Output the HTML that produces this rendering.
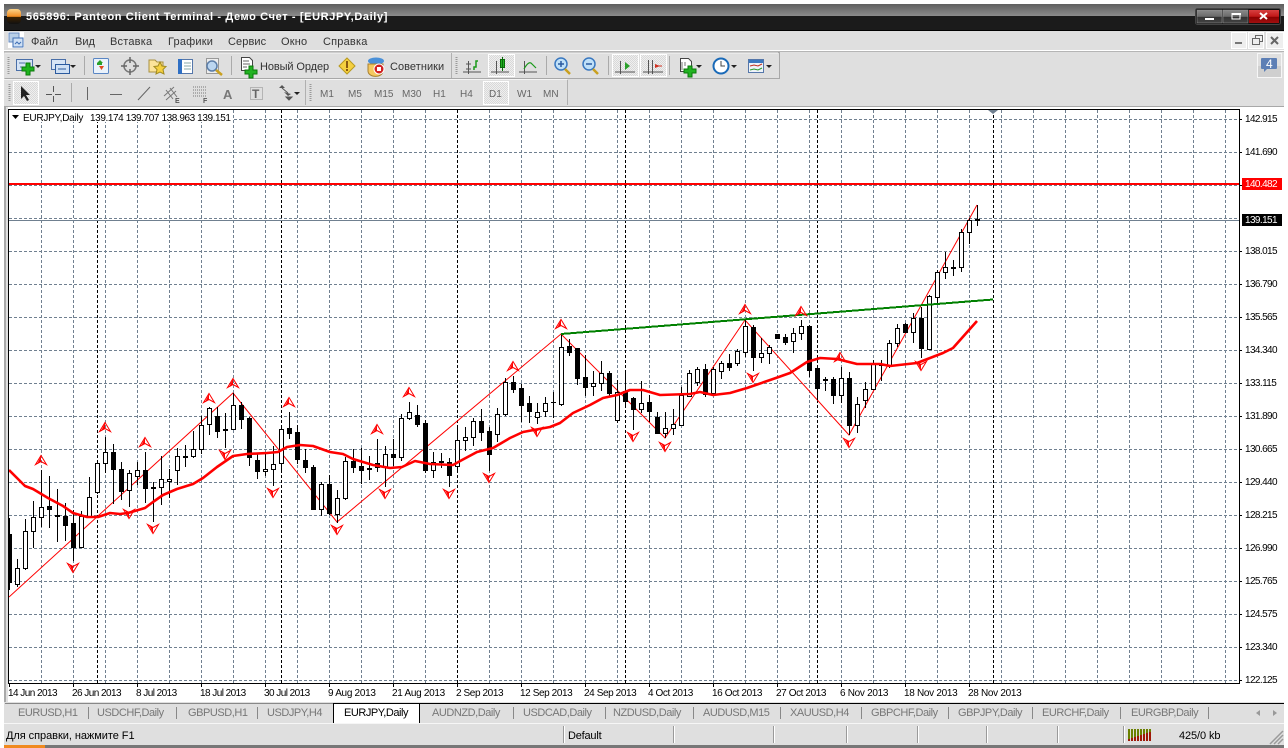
<!DOCTYPE html>
<html><head><meta charset="utf-8"><title>Panteon Client Terminal</title>
<style>
html,body{margin:0;padding:0;background:#fff;width:1288px;height:748px;overflow:hidden}
svg{display:block;position:absolute;left:0;top:0}
text{font-family:"Liberation Sans","Noto Sans CJK SC",sans-serif;font-size:11px;fill:#333}
.ax{font-size:10px;letter-spacing:-.6px;fill:#000}
.d1{letter-spacing:-.55px}.d2{letter-spacing:-.4px}.d3{letter-spacing:-.3px}
.tab{fill:#777;letter-spacing:-.45px}
.tf{font-size:10px;fill:#666}
</style></head><body>
<svg width="1288" height="748" viewBox="0 0 1288 748" xmlns="http://www.w3.org/2000/svg">
<defs>
<linearGradient id="tg" x1="0" y1="0" x2="0" y2="1"><stop offset="0" stop-color="#5e5e5e"/><stop offset="1" stop-color="#8c8c8c"/></linearGradient>
<linearGradient id="or" x1="0" y1="0" x2="0" y2="1"><stop offset="0" stop-color="#fbd48a"/><stop offset=".5" stop-color="#f08a20"/><stop offset=".55" stop-color="#3a2000"/><stop offset="1" stop-color="#111"/></linearGradient>
<linearGradient id="bt" x1="0" y1="0" x2="0" y2="1"><stop offset="0" stop-color="#8a8a8a"/><stop offset=".5" stop-color="#6a6a6a"/><stop offset=".55" stop-color="#333"/><stop offset="1" stop-color="#444"/></linearGradient>
<linearGradient id="rd" x1="0" y1="0" x2="0" y2="1"><stop offset="0" stop-color="#d84040"/><stop offset=".5" stop-color="#c01818"/><stop offset=".55" stop-color="#8c0000"/><stop offset="1" stop-color="#a01010"/></linearGradient>
<pattern id="ck" width="2" height="2" patternUnits="userSpaceOnUse"><rect width="2" height="2" fill="#efefef"/><rect width="1" height="1" fill="#d8d8d8"/><rect x="1" y="1" width="1" height="1" fill="#d8d8d8"/></pattern>
<g id="up"><path d="M-5.5 4.5L0-4.5 5.5 4.5 0 1.5z" fill="none" stroke="#f00"/><path d="M0-4L-4 4 0 1.5z" fill="#f00"/></g>
<g id="dn"><path d="M-5.5-4.5L0 4.5 5.5-4.5 0-1.5z" fill="none" stroke="#f00"/><path d="M0 4L-4-4 0-1.5z" fill="#f00"/></g>
<g id="dd"><path d="M-3 0h6l-3 3z" fill="#222"/></g>
</defs>

<!-- window frame -->
<rect x="4" y="4" width="1280" height="744" fill="#dfdfdf"/>
<rect x="4" y="4" width="1280" height="12" fill="url(#tg)"/>
<rect x="4" y="16" width="1280" height="15" fill="#1b1b1b"/>
<rect x="4" y="30" width="1280" height="1" fill="#000"/>
<rect x="4" y="745" width="1280" height="3" fill="#777"/>
<rect x="4" y="745" width="41" height="3" fill="#f08a20"/>
<rect x="7" y="9" width="14" height="15" rx="4" fill="url(#or)"/>
<text x="26" y="20" style="font-weight:bold;fill:#fff;letter-spacing:.62px">565896: Panteon Client Terminal - Демо Счет - [EURJPY,Daily]</text>
<!-- window buttons -->
<rect x="1195.5" y="8.5" width="85" height="16" rx="2" fill="#111" stroke="#444"/>
<rect x="1197" y="10" width="25" height="13" fill="url(#bt)" stroke="#999" stroke-width=".5"/>
<rect x="1223" y="10" width="25" height="13" fill="url(#bt)" stroke="#999" stroke-width=".5"/>
<rect x="1249" y="10" width="30" height="13" fill="url(#rd)"/>
<rect x="1205" y="18" width="9" height="2" fill="#fff"/>
<path d="M1232 13.5h8v5.500h-8z" fill="none" stroke="#fff"/><rect x="1232" y="13" width="9" height="2" fill="#fff"/>
<path d="M1260 13l7 6M1267 13l-7 6" stroke="#fff" stroke-width="2" fill="none"/>

<!-- menu -->
<rect x="4" y="50" width="1280" height="1" fill="#fff"/>
<rect x="4" y="51" width="1280" height="1" fill="#b5b5b5"/>
<rect x="8" y="32" width="16" height="16" fill="#fff"/>
<rect x="9" y="33" width="10" height="9" fill="#b8cfe8" stroke="#6a8cc0"/><rect x="13" y="38" width="10" height="9" fill="#cfe0f4" stroke="#3f6fb5"/><path d="M15 44l2-2 2 2 2-2" fill="none" stroke="#3f6fb5"/>
<text x="31" y="45">Файл</text><text x="75" y="45">Вид</text><text x="110" y="45" style="letter-spacing:.2px">Вставка</text><text x="168" y="45" style="letter-spacing:.2px">Графики</text><text x="228" y="45" style="letter-spacing:.1px">Сервис</text><text x="281" y="45" style="letter-spacing:.2px">Окно</text><text x="323" y="45" style="letter-spacing:.2px">Справка</text>
<g fill="#eee" stroke="#fff"><rect x="1231.500" y="32.500" width="15" height="16"/><rect x="1248.500" y="32.500" width="15" height="16"/><rect x="1266.500" y="32.500" width="17" height="16"/></g>
<rect x="1235" y="42" width="7" height="2" fill="#777"/>
<path d="M1252.500 38.500h7v6h-7zM1255.500 38.500v-3h7v6h-3" fill="none" stroke="#666"/>
<path d="M1271 37l7 7M1278 37l-7 7" stroke="#666" stroke-width="2" fill="none"/>

<!-- toolbars -->
<path d="M4.500 52.500H779.500V78.500H4.500" fill="none" stroke="#a8a8a8"/>
<path d="M5 53H778" stroke="#f4f4f4"/>
<path d="M451.500 53V78M567.500 80V105M305.500 80V105" stroke="#b0b0b0" fill="none"/>
<path d="M4 79.500H567" stroke="#f4f4f4"/>
<path d="M84.500 56V75M231.500 56V75M546.500 56V75M608.500 56V75M669.500 56V75M71.500 83V102" stroke="#aaa"/>
<path d="M8.500 57V75M9.500 84V102M456.500 57V75M310.500 84V102" stroke="#9a9a9a" stroke-dasharray="1 1" stroke-width="2"/>

<!-- row1 icons -->
<g>
<rect x="16.500" y="59.500" width="16" height="11" fill="#d6e4f5" stroke="#4a6fa8"/><path d="M19 63h6M20 67h8" stroke="#4a6fa8"/><path d="M26 63h4v4h4v4h-4v4h-4v-4h-4v-4h4z" fill="#1db31d" stroke="#0a7a0a"/><use href="#dd" x="38" y="65"/>
<rect x="51.500" y="59.500" width="14" height="10" fill="#d6e4f5" stroke="#4a6fa8"/><rect x="55.500" y="64.500" width="14" height="9" fill="#cfe0f4" stroke="#2b5a9e"/><path d="M58 69h8" stroke="#2b5a9e"/><use href="#dd" x="73" y="65"/>
<rect x="93.500" y="58.500" width="15" height="15" rx="1" fill="#eaf2fb" stroke="#5a86c4"/><path d="M97 63l3-3 3 3z" fill="#2aa02a"/><path d="M99 66h5l-2.500 4z" fill="#e04a20"/><path d="M97 63h5v2h-5z" fill="#2aa02a"/>
<circle cx="130" cy="66" r="6" fill="none" stroke="#777" stroke-width="1.500"/><path d="M130 57v6M130 69v6M121 66h6M133 66h6" stroke="#666" stroke-width="1.500"/>
<path d="M149 60h6l2 2h6v10h-14z" fill="#fbe39a" stroke="#a89040"/><path d="M160 62l2 4 4 .5-3 3 1 4.500-4-2-4 2 1-4.500-3-3 4-.5z" fill="#f5d040" stroke="#a08a20"/>
<rect x="178.500" y="59.500" width="14" height="14" fill="#fff" stroke="#5577aa"/><rect x="178" y="59" width="4" height="15" fill="#2f6fc4"/><path d="M184 63h7M184 66h7M184 69h7" stroke="#8aa"/>
<rect x="206.500" y="58.500" width="12" height="15" fill="#eee" stroke="#999"/><circle cx="212" cy="66" r="5" fill="#bcd6f0" stroke="#5d7ea8" stroke-width="1.500"/><path d="M216 70l6 5" stroke="#c9a020" stroke-width="2.500"/>
<path d="M241.500 57.500h8l3 3v10h-11z" fill="#fff" stroke="#444"/><path d="M243 61h6M243 64h7M243 67h4" stroke="#666"/><path d="M249 66h4v4h4v4h-4v4h-4v-4h-4v-4h4z" fill="#22b322" stroke="#0a7a0a"/>
<text x="260" y="70" style="letter-spacing:-.1px">Новый Ордер</text>
<path d="M347 58l8 8-8 8-8-8z" fill="#f5d040" stroke="#b89a20"/><rect x="346" y="61" width="2" height="7" fill="#8a5a10"/><rect x="346" y="69" width="2" height="2" fill="#8a5a10"/>
<ellipse cx="376" cy="61" rx="8" ry="3.500" fill="#4a90d8"/><path d="M368 64h15v7a7 5 0 0 1-15 0z" fill="#f5c860" stroke="#a88030"/><circle cx="379" cy="69" r="5" fill="#d02020" stroke="#fff"/><rect x="377" y="67" width="4" height="4" fill="#fff"/>
<text x="390" y="70" style="letter-spacing:.05px">Советники</text>
</g>
<!-- chart type icons -->
<g>
<rect x="488.500" y="54.500" width="26" height="22" fill="url(#ck)" stroke="#fff"/>
<rect x="612.500" y="54.500" width="26" height="22" fill="url(#ck)" stroke="#fff"/>
<rect x="640.500" y="54.500" width="26" height="22" fill="url(#ck)" stroke="#fff"/>
<path d="M468.500 61v13M463 72h18M466 64h5M466 69h5" stroke="#555" fill="none"/><path d="M474 70v-3h2v-6h2" stroke="#1a9a1a" fill="none" stroke-width="1.500"/>
<path d="M496.500 61v13M491 72h18" stroke="#555" fill="none"/><rect x="500.500" y="59.500" width="4" height="8" fill="#21b321" stroke="#0a6a0a"/><path d="M502.500 57v14" stroke="#0a6a0a"/>
<path d="M524.500 61v13M519 72h18" stroke="#555" fill="none"/><path d="M524 69q5-9 8-5l4 4" stroke="#1a9a1a" fill="none" stroke-width="1.200"/>
<circle cx="561" cy="64" r="6" fill="#bfe0f8" stroke="#3a78c0" stroke-width="1.500"/><path d="M558 64h6M561 61v6" stroke="#2a5aa0" stroke-width="1.500"/><path d="M565 69l5 5" stroke="#c9a020" stroke-width="2.500"/>
<circle cx="589" cy="64" r="6" fill="#bfe0f8" stroke="#3a78c0" stroke-width="1.500"/><path d="M586 64h6" stroke="#2a5aa0" stroke-width="1.500"/><path d="M593 69l5 5" stroke="#c9a020" stroke-width="2.500"/>
<path d="M620.500 61v13M615 72h20" stroke="#555" fill="none"/><path d="M625 62l5 4-5 4z" fill="#2aa02a"/>
<path d="M648.500 60v14M652.500 60v14M643 72h20" stroke="#555" fill="none"/><path d="M660 66l-5-2v4z" fill="#d03020"/><path d="M656 66h6" stroke="#d03020"/>
<path d="M680.500 58.500h8l3 3v10h-11z" fill="#fff" stroke="#444"/><path d="M682 62v8M685 62v4" stroke="#777"/><path d="M688 66h4v3h4v4h-4v4h-4v-4h-4v-4h4z" fill="#22b322" stroke="#0a7a0a"/><use href="#dd" x="699" y="65"/>
<circle cx="721" cy="66" r="7.500" fill="#fff" stroke="#1a6ab8" stroke-width="2"/><path d="M721 61v5h4" stroke="#444" fill="none"/><use href="#dd" x="734" y="65"/>
<rect x="748.500" y="59.500" width="15" height="13" fill="#eef3f9" stroke="#5577aa"/><rect x="749" y="60" width="14" height="3" fill="#3a78c0"/><path d="M750 66l4-1 4 1 4-2" stroke="#c03020" fill="none"/><path d="M750 70l4-1 4 1 4-2" stroke="#2a9a2a" fill="none"/><use href="#dd" x="769" y="65"/>
</g>
<!-- message button -->
<rect x="1257.500" y="53.500" width="24" height="24" fill="#dfdfdf" stroke="#f6f6f6"/>
<rect x="1258" y="66" width="23" height="11" fill="#cfcfcf"/>
<path d="M1262 58h14a1 1 0 0 1 1 1v9a1 1 0 0 1-1 1h-9l-3 3v-3h-2a1 1 0 0 1-1-1v-9a1 1 0 0 1 1-1z" fill="#5d7fb5"/>
<text x="1266" y="68" style="fill:#fff;font-size:12px">4</text>

<!-- row 2 -->
<rect x="13.500" y="81.500" width="25" height="23" fill="url(#ck)" stroke="#fff"/>
<path d="M21 86v13l3-3 3 5 2-1-3-5h4z" fill="#222"/>
<path d="M53.500 86v6M53.500 96v6M46 94.500h6M55 94.500h6" stroke="#555"/>
<path d="M87.500 87v13M110 94.500h12M138 100l12-13" stroke="#666" fill="none"/>
<path d="M164 96l10-9M166 100l10-9M166 90l7 9M170 88l7 9" stroke="#777" fill="none"/><text x="175" y="103" style="font-size:7px;fill:#555;font-weight:bold">E</text>
<path d="M193 87h14M193 90h14M193 93h14M193 96h14" stroke="#777" stroke-dasharray="1 1"/><text x="203" y="103" style="font-size:7px;fill:#555;font-weight:bold">F</text>
<text x="223" y="99" style="font-size:13px;font-weight:bold;fill:#777">A</text>
<rect x="250.500" y="87.500" width="12" height="12" fill="none" stroke="#888" stroke-dasharray="1 1"/><text x="252" y="98" style="font-size:12px;font-weight:bold;fill:#666">T</text>
<path d="M279 88l3-3 3 3zM284 92l4 4 3-2" fill="#555"/><path d="M282 88l6 5M286 97l3 3 3-3z" fill="#555" stroke="#555"/><use href="#dd" x="297" y="92"/>
<rect x="483.500" y="81.500" width="25" height="23" fill="url(#ck)" stroke="#fff"/>
<text class="tf" x="320" y="97">M1</text><text class="tf" x="348" y="97">M5</text><text class="tf" x="374" y="97">M15</text><text class="tf" x="402" y="97">M30</text><text class="tf" x="433" y="97">H1</text><text class="tf" x="460" y="97">H4</text><text class="tf" x="489" y="97">D1</text><text class="tf" x="517" y="97">W1</text><text class="tf" x="543" y="97">MN</text>

<!-- chart area -->
<rect x="4" y="106" width="1280" height="1" fill="#a8a8a8"/>
<rect x="4" y="107" width="4" height="595" fill="#a9a9a9"/>
<rect x="6" y="107" width="2" height="595" fill="#e0e0e0"/>
<rect x="8" y="107" width="1276" height="595" fill="#fff"/>
<rect x="1284" y="4" width="4" height="744" fill="#fff"/>
<g shape-rendering="crispEdges" fill="none">
<path stroke="#708090" stroke-dasharray="3 2" d="M9 119.500H1239M9 152.500H1239M9 185.500H1239M9 218.500H1239M9 251.500H1239M9 284.500H1239M9 317.500H1239M9 350.500H1239M9 383.500H1239M9 416.500H1239M9 449.500H1239M9 482.500H1239M9 515.500H1239M9 548.500H1239M9 581.500H1239M9 614.500H1239M9 647.500H1239M9 680.500H1239"/>
<path stroke="#708090" stroke-dasharray="3 2" d="M41.500 110V683M73.500 110V683M105.500 110V683M137.500 110V683M169.500 110V683M201.500 110V683M233.500 110V683M265.500 110V683M297.500 110V683M329.500 110V683M361.500 110V683M393.500 110V683M425.500 110V683M457.500 110V683M489.500 110V683M521.500 110V683M553.500 110V683M585.500 110V683M617.500 110V683M649.500 110V683M681.500 110V683M713.500 110V683M745.500 110V683M777.500 110V683M809.500 110V683M841.500 110V683M873.500 110V683M905.500 110V683M937.500 110V683M969.500 110V683M1001.500 110V683M1033.500 110V683M1065.500 110V683M1097.500 110V683M1129.500 110V683M1161.500 110V683M1193.500 110V683M1225.500 110V683"/>
<path stroke="#000" stroke-dasharray="3 2" d="M97.500 110V683M281.500 110V683M457.500 110V683M625.500 110V683M817.500 110V683M993.500 110V683"/>
<path stroke="#f00" stroke-width="2" d="M9 184H1240"/>
<path stroke="#708090" d="M9 220.500H1240"/>
</g>

<svg x="9" y="110" width="1230" height="573" viewBox="9 110 1230 573">
<!-- thin zigzag -->
<path fill="none" stroke="#f00" stroke-width="1" d="M9 597L233 393 337 522 561 334 665 438 745 320 849 435 977 205"/>
<!-- wicks -->
<g shape-rendering="crispEdges" fill="none">
<path stroke="#000" d="M9.500 518V590M17.500 559V587M25.500 519V570M33.500 501V548M41.500 470V527M49.500 476V528M57.500 489V542M65.500 503V541M73.500 510V561M81.500 511V547M89.500 477V517M97.500 463V494M105.500 437V473M113.500 444V504M121.500 462V500M129.500 470V507M137.500 462V485M145.500 452V503M153.500 482V522M161.500 456V505M169.500 469V498M177.500 448V485M185.500 445V467M193.500 431V458M201.500 416V454M209.500 407V435M217.500 407V438M225.500 413V448M233.500 393V430M241.500 402V429M249.500 417V466M257.500 453V479M265.500 453V476M273.500 446V486M281.500 427V473M289.500 412V439M297.500 425V464M305.500 449V473M313.500 465V510M321.500 482V516M329.500 475V515M337.500 490V523M345.500 457V500M353.500 449V473M361.500 448V484M369.500 456V480M377.500 439V472M385.500 446V487M393.500 439V466M401.500 414V461M409.500 402V420M417.500 405V427M425.500 420V473M433.500 452V478M441.500 453V468M449.500 458V487M457.500 427V473M465.500 427V451M473.500 418V446M481.500 409V441M489.500 427V471M497.500 408V442M505.500 378V416M513.500 376V393M521.500 384V422M529.500 396V423M537.500 403V424M545.500 397V417M553.500 392V418M561.500 334V406M569.500 339V356M577.500 348V385M585.500 355V396M593.500 371V396M601.500 361V391M609.500 371V397M617.500 380V423M625.500 373V407M633.500 397V430M641.500 381V413M649.500 395V422M657.500 412V434M665.500 412V438M673.500 409V435M681.500 387V425M689.500 370V397M697.500 367V386M705.500 364V397M713.500 367V395M721.500 361V379M729.500 354V371M737.500 349V366M745.500 320V357M753.500 325V371M761.500 338V363M769.500 345V364M777.500 334V339M785.500 334V345M793.500 328V353M801.500 320V340M809.500 325V377M817.500 368V400M825.500 377V391M833.500 377V404M841.500 367V403M849.500 372V435M857.500 397V433M865.500 382V408M873.500 360V389M881.500 360V381M889.500 340V368M897.500 324V347M905.500 323V333M913.500 313V343M921.500 307V358M929.500 295V350M937.500 270V305M945.500 252V279M953.500 260V276M961.500 229V272M969.500 218V244M977.500 205V226"/>
<!-- black bodies -->
<path stroke="#000" stroke-width="5" d="M9.500 534V583M49.500 506V510M57.500 515V517M65.500 516V526M73.500 523V548M113.500 452V470M121.500 469V492M145.500 470V489M153.500 487V489M217.500 416V432M225.500 429V431M241.500 405V420M249.500 418V458M257.500 460V472M289.500 428V434M297.500 432V460M305.500 460V468M313.500 467V510M329.500 484V514M353.500 461V468M361.500 466V471M369.500 468V470M377.500 463V468M393.500 454V458M417.500 415V425M425.500 423V471M441.500 461V463M449.500 462V476M481.500 421V433M489.500 431V455M513.500 382V390M521.500 388V406M529.500 403V412M553.500 402V403M569.500 346V353M577.500 348V379M585.500 377V388M609.500 373V394M625.500 391V402M633.500 398V410M649.500 402V412M657.500 417V434M705.500 369V395M729.500 363V368M753.500 327V358M777.500 334V339M785.500 337V343M809.500 326V371M817.500 368V389M825.500 379V381M833.500 379V396M849.500 378V426M881.500 364V366M905.500 324V333M921.500 318V349M953.500 267V269M977.500 219V221"/>
<!-- white bodies -->
<path stroke="#000" fill="#fff" d="M15.500 568.500h4V584.500h-4zM23.500 531.500h4V568.500h-4zM31.500 517.500h4V531.500h-4zM39.500 507.500h4V517.500h-4zM79.500 516.500h4V547.500h-4zM87.500 497.500h4V517.500h-4zM95.500 463.500h4V492.500h-4zM103.500 452.500h4V463.500h-4zM127.500 473.500h4V490.500h-4zM135.500 470.500h4V476.500h-4zM159.500 479.500h4V487.500h-4zM167.500 479.500h4V481.500h-4zM175.500 456.500h4V470.500h-4zM183.500 456.500h4V457.500h-4zM191.500 449.500h4V456.500h-4zM199.500 425.500h4V449.500h-4zM207.500 408.500h4V424.500h-4zM231.500 405.500h4V429.500h-4zM263.500 469.500h4V471.500h-4zM271.500 464.500h4V469.500h-4zM279.500 429.500h4V463.500h-4zM319.500 484.500h4V509.500h-4zM335.500 498.500h4V514.500h-4zM343.500 461.500h4V498.500h-4zM383.500 454.500h4V467.500h-4zM399.500 418.500h4V457.500h-4zM407.500 412.500h4V418.500h-4zM431.500 462.500h4V470.500h-4zM455.500 440.500h4V466.500h-4zM463.500 437.500h4V440.500h-4zM471.500 421.500h4V437.500h-4zM495.500 414.500h4V434.500h-4zM503.500 382.500h4V414.500h-4zM535.500 412.500h4V417.500h-4zM543.500 403.500h4V411.500h-4zM559.500 347.500h4V404.500h-4zM591.500 383.500h4V386.500h-4zM599.500 373.500h4V383.500h-4zM615.500 392.500h4V420.500h-4zM639.500 403.500h4V409.500h-4zM663.500 428.500h4V433.500h-4zM671.500 424.500h4V428.500h-4zM679.500 395.500h4V425.500h-4zM687.500 373.500h4V396.500h-4zM695.500 369.500h4V382.500h-4zM711.500 369.500h4V393.500h-4zM719.500 363.500h4V371.500h-4zM735.500 351.500h4V363.500h-4zM743.500 326.500h4V352.500h-4zM759.500 353.500h4V357.500h-4zM767.500 347.500h4V353.500h-4zM791.500 333.500h4V341.500h-4zM799.500 326.500h4V333.500h-4zM839.500 378.500h4V395.500h-4zM855.500 404.500h4V425.500h-4zM863.500 389.500h4V400.500h-4zM871.500 364.500h4V389.500h-4zM887.500 343.500h4V365.500h-4zM895.500 328.500h4V343.500h-4zM911.500 318.500h4V332.500h-4zM927.500 296.500h4V349.500h-4zM935.500 272.500h4V297.500h-4zM943.500 267.500h4V272.500h-4zM959.500 232.500h4V267.500h-4zM967.500 220.500h4V232.500h-4z"/>
<!-- green trend -->
<path stroke="#008000" stroke-width="2" d="M561 334L993 299.500"/>
</g>
<!-- MA -->
<path fill="none" stroke="#f00" stroke-width="2.600" stroke-linejoin="round" d="M9 470L17 478 25 486 33 489 48 498 63 506 73 513 87 517 98 517 110 513 120 514 128 513 145 508 153 502 163 495 177 489 193 484 203 478 217 467 233 456 247 454 267 453 278 452 287 447 300 445 313 446 330 452 343 454 353 459 373 465 390 468 402 467 415 461 430 464 453 465 462 460 477 452 493 448 510 438 523 432 550 427 560 423 573 413 590 405 603 398 617 395 630 390 643 390 660 395 690 394 700 392 713 395 730 393 747 388 773 379 790 373 807 362 820 358 837 359 857 364 880 364 890 366 917 363 943 353 953 348 977 321"/>
<!-- markers -->
<g>
<use href="#up" x="41" y="460"/><use href="#up" x="105" y="427"/><use href="#up" x="145" y="442"/><use href="#up" x="209" y="398"/><use href="#up" x="233" y="383"/><use href="#up" x="289" y="402"/><use href="#up" x="377" y="429"/><use href="#up" x="409" y="392"/><use href="#up" x="513" y="366"/><use href="#up" x="561" y="324"/><use href="#up" x="745" y="309"/><use href="#up" x="801" y="311"/><use href="#up" x="840" y="357"/>
<use href="#dn" x="73" y="568"/><use href="#dn" x="129" y="514"/><use href="#dn" x="153" y="529"/><use href="#dn" x="225" y="455"/><use href="#dn" x="273" y="493"/><use href="#dn" x="337" y="530"/><use href="#dn" x="385" y="494"/><use href="#dn" x="449" y="494"/><use href="#dn" x="489" y="478"/><use href="#dn" x="537" y="432"/><use href="#dn" x="633" y="437"/><use href="#dn" x="665" y="447"/><use href="#dn" x="753" y="378"/><use href="#dn" x="849" y="443"/><use href="#dn" x="921" y="366"/>
</g>
</svg>

<!-- borders -->
<g shape-rendering="crispEdges" fill="none" stroke="#000">
<path d="M8.500 109V684M8 109.500H1240M1239.500 109V684M8 683.500H1240"/>
<path d="M1239 119.500h3M1239 152.500h3M1239 185.500h3M1239 251.500h3M1239 284.500h3M1239 317.500h3M1239 350.500h3M1239 383.500h3M1239 416.500h3M1239 449.500h3M1239 482.500h3M1239 515.500h3M1239 548.500h3M1239 581.500h3M1239 614.500h3M1239 647.500h3M1239 680.500h3"/>
<path d="M9.500 684v3M73.500 684v3M137.500 684v3M201.500 684v3M265.500 684v3M329.500 684v3M393.500 684v3M457.500 684v3M521.500 684v3M585.500 684v3M649.500 684v3M713.500 684v3M777.500 684v3M841.500 684v3M905.500 684v3M969.500 684v3"/>
</g>
<path d="M988 110h10l-5 4z" fill="#708090"/>
<!-- label top left -->
<rect x="9" y="110" width="223" height="12" fill="#fff"/>
<path d="M12 115h7l-3.500 4z" fill="#000"/>
<text x="23" y="121" class="ax" style="letter-spacing:-.25px">EURJPY,Daily</text>
<text x="90" y="121" class="ax" style="letter-spacing:-.4px">139.174 139.707 138.963 139.151</text>

<!-- price axis -->
<g class="ax">
<text class="ax" x="1245" y="122">142.915</text><text class="ax" x="1245" y="155">141.690</text>
<rect x="1242" y="178" width="40" height="12" fill="#f00"/><text class="ax" x="1245" y="187" style="fill:#fff">140.482</text>
<rect x="1242" y="214" width="40" height="12" fill="#000"/><text class="ax" x="1245" y="223" style="fill:#fff">139.151</text>
<text class="ax" x="1245" y="254">138.015</text><text class="ax" x="1245" y="287">136.790</text><text class="ax" x="1245" y="320">135.565</text><text class="ax" x="1245" y="353">134.340</text><text class="ax" x="1245" y="386">133.115</text><text class="ax" x="1245" y="419">131.890</text><text class="ax" x="1245" y="452">130.665</text><text class="ax" x="1245" y="485">129.440</text><text class="ax" x="1245" y="518">128.215</text><text class="ax" x="1245" y="551">126.990</text><text class="ax" x="1245" y="584">125.765</text><text class="ax" x="1245" y="617">124.575</text><text class="ax" x="1245" y="650">123.340</text><text class="ax" x="1245" y="683">122.125</text>
</g>
<!-- date axis -->
<text class="ax d1" x="8" y="696">14 Jun 2013</text><text class="ax d1" x="72" y="696">26 Jun 2013</text><text class="ax d1" x="136" y="696">8 Jul 2013</text><text class="ax d1" x="200" y="696">18 Jul 2013</text><text class="ax d1" x="264" y="696">30 Jul 2013</text><text class="ax d3" x="328" y="696">9 Aug 2013</text><text class="ax d3" x="392" y="696">21 Aug 2013</text><text class="ax d2" x="456" y="696">2 Sep 2013</text><text class="ax d2" x="520" y="696">12 Sep 2013</text><text class="ax d2" x="584" y="696">24 Sep 2013</text><text class="ax d2" x="648" y="696">4 Oct 2013</text><text class="ax d2" x="712" y="696">16 Oct 2013</text><text class="ax d2" x="776" y="696">27 Oct 2013</text><text class="ax d3" x="840" y="696">6 Nov 2013</text><text class="ax d3" x="904" y="696">18 Nov 2013</text><text class="ax d3" x="968" y="696">28 Nov 2013</text>

<!-- tabs -->
<rect x="4" y="702" width="1280" height="21" fill="#dfdfdf"/>
<path d="M5 703.500H333M419 703.500H1284" stroke="#000" shape-rendering="crispEdges"/>
<path d="M5 703.500H333" stroke="#888" shape-rendering="crispEdges"/>
<rect x="333.500" y="703.500" width="86" height="19" fill="#fff" stroke="#000"/>
<rect x="334" y="722" width="85" height="1" fill="#fff"/>
<path d="M88.500 707V719M176.500 707V719M257.500 707V719M513.500 707V719M605.500 707V719M693.500 707V719M780.500 707V719M861.500 707V719M948.500 707V719M1032.500 707V719M1120.500 707V719M1208.500 707V719" stroke="#888" shape-rendering="crispEdges"/>
<text class="tab" x="18" y="716">EURUSD,H1</text><text class="tab" x="97" y="716">USDCHF,Daily</text><text class="tab" x="188" y="716">GBPUSD,H1</text><text class="tab" x="267" y="716">USDJPY,H4</text><text class="tab" x="344" y="716" style="fill:#000">EURJPY,Daily</text><text class="tab" x="432" y="716">AUDNZD,Daily</text><text class="tab" x="523" y="716">USDCAD,Daily</text><text class="tab" x="613" y="716">NZDUSD,Daily</text><text class="tab" x="703" y="716">AUDUSD,M15</text><text class="tab" x="790" y="716">XAUUSD,H4</text><text class="tab" x="871" y="716">GBPCHF,Daily</text><text class="tab" x="958" y="716">GBPJPY,Daily</text><text class="tab" x="1042" y="716">EURCHF,Daily</text><text class="tab" x="1131" y="716">EURGBP,Daily</text>
<path d="M1260 710l-4 3 4 3zM1273 710l4 3-4 3z" fill="#999"/>

<!-- status bar -->
<rect x="4" y="723" width="1280" height="1" fill="#f6f6f6"/>
<text x="6" y="739" style="fill:#000;letter-spacing:-.05px">Для справки, нажмите F1</text>
<text x="568" y="739" style="fill:#000;letter-spacing:-.2px">Default</text>
<text x="1179" y="739" style="fill:#000;letter-spacing:-.1px">425/0 kb</text>
<path d="M563.500 726V743M673.500 726V743M773.500 726V743M846.500 726V743M917.500 726V743M986.500 726V743M1057.500 726V743M1123.500 726V743" stroke="#9a9a9a" shape-rendering="crispEdges"/>
<path d="M564.500 726V743M674.500 726V743M774.500 726V743M847.500 726V743M918.500 726V743M987.500 726V743M1058.500 726V743M1124.500 726V743" stroke="#fff" shape-rendering="crispEdges"/>
<g shape-rendering="crispEdges">
<path d="M1128 729h2v10h-2zM1131 729h2v9h-2zM1134 729h2v8h-2zM1137 729h2v7h-2zM1140 729h2v6h-2zM1143 729h2v5h-2zM1146 729h2v4h-2zM1149 729h2v3h-2z" fill="#6a8000"/>
<path d="M1128 739h2v2h-2zM1131 738h2v3h-2zM1134 737h2v4h-2zM1137 736h2v5h-2zM1140 735h2v6h-2zM1143 734h2v7h-2zM1146 733h2v8h-2zM1149 732h2v9h-2z" fill="#a01808"/>
</g>
<path d="M1270 744l13-13M1274 744l9-9M1278 744l5-5" stroke="#9a9a9a" stroke-width="1.500"/>
</svg>
</body></html>
